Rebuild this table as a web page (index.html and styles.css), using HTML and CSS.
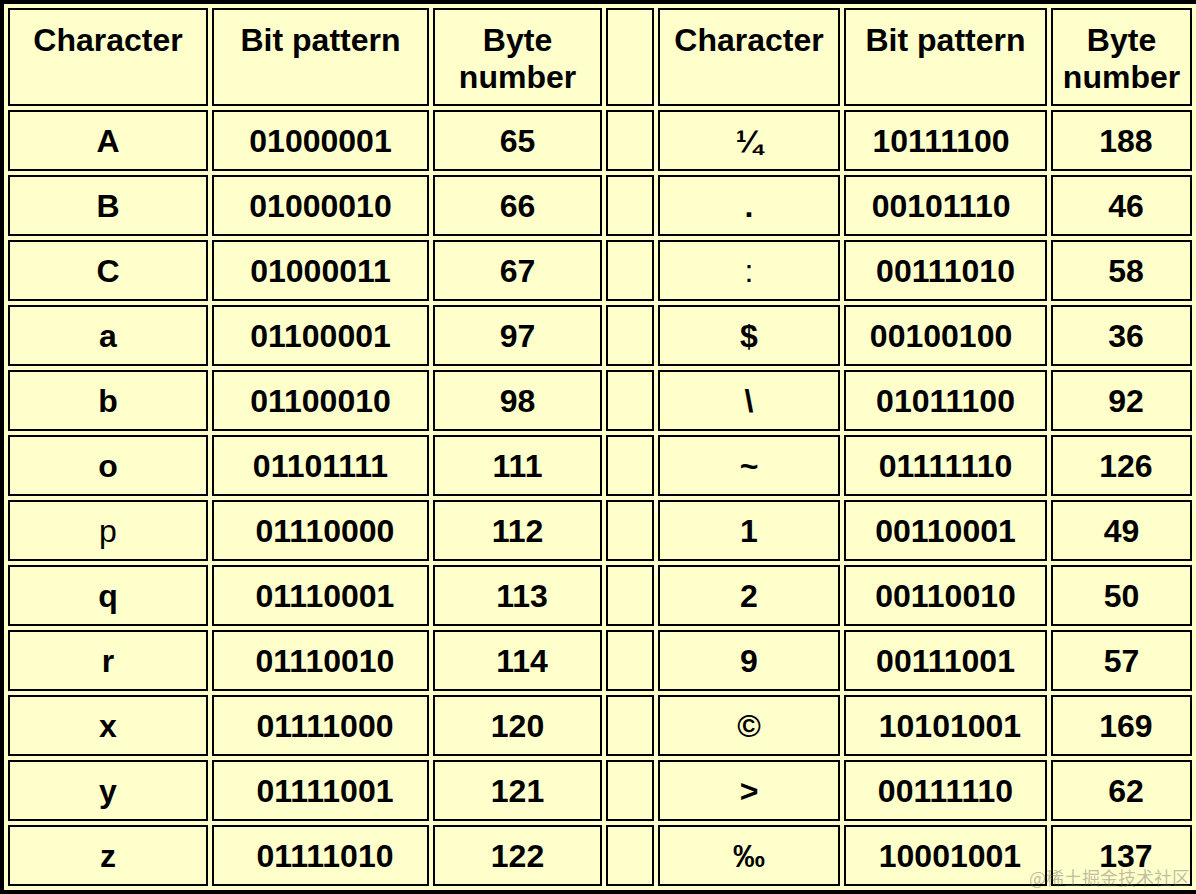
FILE: index.html
```html
<!DOCTYPE html>
<html lang="en">
<head>
<meta charset="utf-8">
<title>Character codes</title>
<link rel="stylesheet" href="styles.css">
</head>
<body>
<div class="page">
  <div class="codes">
    <div class="cell head">Character</div>
    <div class="cell head">Bit pattern</div>
    <div class="cell head">Byte<br>number</div>
    <div class="cell head"></div>
    <div class="cell head">Character</div>
    <div class="cell head">Bit pattern</div>
    <div class="cell head">Byte<br>number</div>

    <div class="cell">A</div><div class="cell">01000001</div><div class="cell">65</div><div class="cell"></div><div class="cell">¼</div><div class="cell">10111100&nbsp;</div><div class="cell">&nbsp;188</div>
    <div class="cell">B</div><div class="cell">01000010</div><div class="cell">66</div><div class="cell"></div><div class="cell">.</div><div class="cell">00101110&nbsp;</div><div class="cell">&nbsp;46</div>
    <div class="cell">C</div><div class="cell">01000011</div><div class="cell">67</div><div class="cell"></div><div class="cell light">:</div><div class="cell">00111010</div><div class="cell">&nbsp;58</div>
    <div class="cell">a</div><div class="cell">01100001</div><div class="cell">97</div><div class="cell"></div><div class="cell">$</div><div class="cell">00100100&nbsp;</div><div class="cell">&nbsp;36</div>
    <div class="cell">b</div><div class="cell">01100010</div><div class="cell">98</div><div class="cell"></div><div class="cell">\</div><div class="cell">01011100</div><div class="cell">&nbsp;92</div>
    <div class="cell">o</div><div class="cell">01101111</div><div class="cell">111</div><div class="cell"></div><div class="cell">~</div><div class="cell">01111110</div><div class="cell">&nbsp;126</div>
    <div class="cell light">p</div><div class="cell">&nbsp;01110000</div><div class="cell">112</div><div class="cell"></div><div class="cell">1</div><div class="cell">00110001</div><div class="cell">49</div>
    <div class="cell">q</div><div class="cell">&nbsp;01110001</div><div class="cell">&nbsp;113</div><div class="cell"></div><div class="cell">2</div><div class="cell">00110010</div><div class="cell">50</div>
    <div class="cell">r</div><div class="cell">&nbsp;01110010</div><div class="cell">&nbsp;114</div><div class="cell"></div><div class="cell">9</div><div class="cell">00111001</div><div class="cell">57</div>
    <div class="cell">x</div><div class="cell">&nbsp;01111000</div><div class="cell">120</div><div class="cell"></div><div class="cell">©</div><div class="cell">&nbsp;10101001</div><div class="cell">&nbsp;169</div>
    <div class="cell">y</div><div class="cell">&nbsp;01111001</div><div class="cell">121</div><div class="cell"></div><div class="cell">&gt;</div><div class="cell">00111110</div><div class="cell">&nbsp;62</div>
    <div class="cell">z</div><div class="cell">&nbsp;01111010</div><div class="cell">122</div><div class="cell"></div><div class="cell">‰</div><div class="cell">&nbsp;10001001</div><div class="cell">&nbsp;137</div>
  </div>
  <div class="watermark">@稀土掘金技术社区</div>
</div>
</body>
</html>
```

FILE: styles.css
```css
html, body {
  margin: 0;
  padding: 0;
  background: #ffffcc;
  overflow: hidden;
}

.page {
  position: relative;
  width: 1196px;
  height: 894px;
  overflow: hidden;
}

.codes {
  display: grid;
  width: max-content;
  grid-template-columns: 200px 217px 169px 48px 182px 203px 141px;
  grid-template-rows: 98px repeat(12, 61px);
  gap: 4px;
  padding: 4px;
  border: 4px solid #000;
  background: #ffffcc;
  font-family: "Liberation Sans", Arial, sans-serif;
  font-weight: bold;
  font-size: 32px;
  color: #000;
}

.cell {
  box-sizing: border-box;
  border: 2px solid #000;
  display: flex;
  align-items: center;
  justify-content: center;
  text-align: center;
  white-space: nowrap;
  line-height: 37px;
  padding-top: 2px;
}

.head {
  align-items: flex-start;
  padding-top: 12px;
}

.light {
  font-weight: normal;
}

.watermark {
  position: absolute;
  right: 6px;
  bottom: 7px;
  font-family: "Noto Sans CJK SC", "Noto Sans", sans-serif;
  font-size: 18px;
  line-height: 20px;
  color: rgba(110, 110, 100, 0.45);
}
```
